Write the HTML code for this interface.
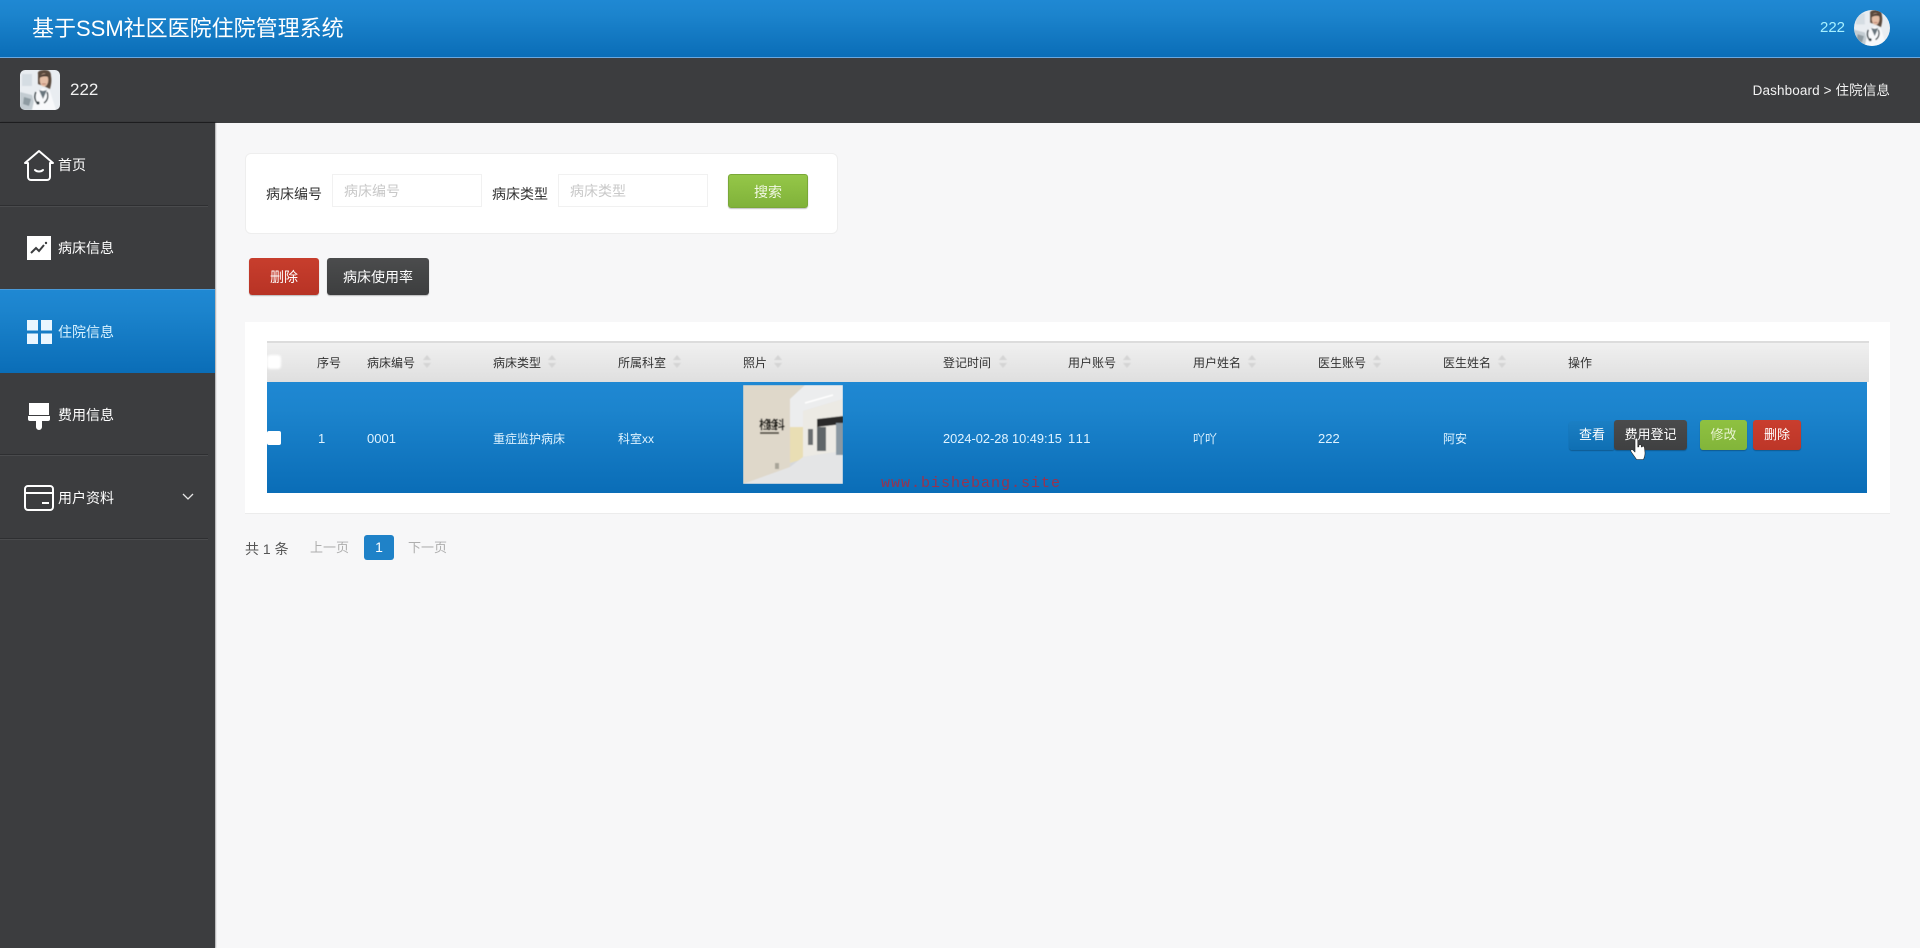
<!DOCTYPE html>
<html lang="zh">
<head>
<meta charset="utf-8">
<title>基于SSM社区医院住院管理系统</title>
<style>
*{box-sizing:border-box;margin:0;padding:0}
html,body{width:1920px;height:948px;overflow:hidden;background:#f7f7f8}
body{font-family:"Liberation Sans","Noto Sans CJK SC",sans-serif;color:#333}
#p{position:absolute;left:0;top:0;width:1920px;height:948px;overflow:hidden;background:#f7f7f8;filter:blur(.35px)}
.a{position:absolute}
.t{position:absolute;line-height:20px;height:20px;white-space:nowrap}
.blue{background:linear-gradient(#1f88d3,#1c84cd 25%,#0a6db7)}
.nav{color:#fff;font-size:14px;left:58px}
.sep{position:absolute;left:0;width:208px;height:1px;background:#2e2f31;box-shadow:0 1px 0 #4a4b4d}
.btn{position:absolute;color:#fff;font-size:13px;text-align:center;border-radius:3px;box-shadow:0 1px 1px rgba(0,0,0,.25)}
.th{font-size:12px;color:#333;top:353px}
.td{font-size:12px;color:#dff3ff;top:429px}
.n{font-size:13px}
.sort{position:absolute;top:355px;width:8px;height:13px;filter:blur(.5px)}
</style>
</head>
<body>
<div id="p">
<svg width="0" height="0" style="position:absolute">
<defs><filter id="av" x="0" y="0" width="100%" height="100%"><feGaussianBlur stdDeviation=".5"/></filter></defs>
<symbol id="doc" viewBox="0 0 40 40">
<rect width="40" height="40" fill="#e9edf1"/>
<g filter="url(#av)">
<rect x="2" y="4" width="10" height="12" fill="#d5dde3"/>
<path d="M0 22l12 3 4 15H0z" fill="#c3ccd2"/>
<path d="M4 27l7 2-2 7-6-2z" fill="#8e9ba2"/>
<path d="M12 40l4-18 7-4 7 3 6 19z" fill="#f8f9fb"/>
<path d="M19 20l4 9 4-9-4 1z" fill="#68757d"/>
<path d="M16 22c-2 5-1 9 2 12M27 22c2 5 0 9-3 11" stroke="#2f3a41" stroke-width="1.400" fill="none"/>
<circle cx="18" cy="33" r="1.600" fill="#2f3a41"/>
<path d="M18 4c-1-3 3-4 7-4 4 0 6 2 6 6 1 5 0 9-1 13l-4-2-8-3z" fill="#5a4a3e"/>
<ellipse cx="24" cy="10" rx="4.300" ry="6.500" fill="#e4bda5"/>
<path d="M19.500 8c1-3 3-4 5-4 2 0 3.500 1 4 3-3-1-6-1-9 1z" fill="#4a3b31"/>
<path d="M22 14h4" stroke="#b06a5c" stroke-width=".8"/>
</g>
</symbol>
</svg>

<!-- top bar -->
<div class="a blue" style="left:0;top:0;width:1920px;height:57px"></div>
<div class="a" style="left:0;top:57px;width:1920px;height:1px;background:#6aa8e0"></div>
<div class="t" style="left:32px;top:15px;height:28px;line-height:28px;font-size:22px;color:#fff">基于SSM社区医院住院管理系统</div>
<div class="t" style="left:1820px;top:18px;font-size:15px;color:#a6f0ff">222</div>
<svg class="a" style="left:1854px;top:10px;border-radius:50%" width="36" height="36"><use href="#doc" width="36" height="36"/></svg>

<!-- sub bar -->
<div class="a" style="left:0;top:58px;width:1920px;height:65px;background:#3c3d3f"></div>
<svg class="a" style="left:20px;top:70px;border-radius:5px" width="40" height="40"><use href="#doc" width="40" height="40"/></svg>
<div class="t" style="left:70px;top:80px;font-size:17px;color:#f2f2f2">222</div>
<div class="t" style="right:30px;top:81px;font-size:13.5px;letter-spacing:.12px;color:#f2f2f2">Dashboard &gt; 住院信息</div>

<!-- sidebar -->
<div class="a" style="left:0;top:122px;width:215px;height:826px;background:#3c3d3f;border-top:1px solid #1d1d1f;box-shadow:1px 0 1px rgba(0,0,0,.3)"></div>
<div class="sep" style="top:205px"></div>
<div class="sep" style="top:454px"></div>
<div class="sep" style="top:538px"></div>
<div class="a blue" style="left:0;top:289px;width:215px;height:84px;border-top:1px solid #4a9ad8"></div>

<svg class="a" style="left:23px;top:149px" width="32" height="33" viewBox="0 0 32 33" fill="none" stroke="#fff" stroke-width="2" stroke-linejoin="round" stroke-linecap="round">
<path d="M2 14L16 2l14 12h-3v14a3 3 0 0 1-3 3H8a3 3 0 0 1-3-3V14z"/>
<path d="M12 21c2 2 6 2 8 0"/>
</svg>
<div class="t nav" style="top:155px">首页</div>

<svg class="a" style="left:27px;top:236px" width="24" height="24" viewBox="0 0 24 24">
<rect width="24" height="24" fill="#fff"/>
<path d="M4 17l5-5 3 3 5-6" fill="none" stroke="#3c3d3f" stroke-width="2"/>
<circle cx="19" cy="7" r="1.200" fill="#3c3d3f"/>
</svg>
<div class="t nav" style="top:238px">病床信息</div>

<svg class="a" style="left:27px;top:320px" width="25" height="24" viewBox="0 0 25 24" fill="#eaf6ff">
<rect width="11" height="10.500"/><rect x="14" width="11" height="10.500"/><rect y="13.500" width="11" height="10.500"/><rect x="14" y="13.500" width="11" height="10.500"/>
</svg>
<div class="t nav" style="top:322px;color:#d8f2ff">住院信息</div>

<svg class="a" style="left:28px;top:403px" width="22" height="27" viewBox="0 0 22 27" fill="#fff">
<path d="M1 0h20v12H1z"/><path d="M0 13h22v3a2 2 0 0 1-2 2h-6v6a3 3 0 0 1-6 0v-6H2a2 2 0 0 1-2-2z"/>
</svg>
<div class="t nav" style="top:405px">费用信息</div>

<svg class="a" style="left:24px;top:485px" width="30" height="26" viewBox="0 0 30 26" fill="none" stroke="#fff" stroke-width="2">
<rect x="1" y="1" width="28" height="24" rx="3"/>
<path d="M1 8h28M18 18h7"/>
</svg>
<div class="t nav" style="top:488px">用户资料</div>
<svg class="a" style="left:182px;top:493px" width="12" height="8" viewBox="0 0 12 8" fill="none" stroke="#e6e6e6" stroke-width="1.300"><path d="M1 1l5 5 5-5"/></svg>

<!-- search panel -->
<div class="a" style="left:245px;top:153px;width:593px;height:81px;background:#fff;border:1px solid #eee;border-radius:6px"></div>
<div class="t" style="left:266px;top:184px;font-size:14px">病床编号</div>
<div class="a" style="left:332px;top:174px;width:150px;height:33px;background:#fff;border:1px solid #f1f1f1"></div>
<div class="t" style="left:344px;top:181px;font-size:14px;color:#c8c8c8">病床编号</div>
<div class="t" style="left:492px;top:184px;font-size:14px">病床类型</div>
<div class="a" style="left:558px;top:174px;width:150px;height:33px;background:#fff;border:1px solid #f1f1f1"></div>
<div class="t" style="left:570px;top:181px;font-size:14px;color:#c8c8c8">病床类型</div>
<div class="btn" style="left:728px;top:174px;width:80px;height:34px;line-height:34px;font-size:14px;background:linear-gradient(#95c748,#80b23a);border:1px solid #7aa838;color:#f2f8e4">搜索</div>

<!-- action buttons -->
<div class="btn" style="left:249px;top:258px;width:70px;height:37px;line-height:38px;font-size:14px;background:linear-gradient(#c73e2d,#b83325)">删除</div>
<div class="btn" style="left:327px;top:258px;width:102px;height:37px;line-height:38px;font-size:14px;background:linear-gradient(#4b4c4d,#3d3e3f)">病床使用率</div>

<!-- table panel -->
<div class="a" style="left:245px;top:322px;width:1645px;height:192px;background:#fff;border-bottom:1px solid #ececec"></div>
<div class="a" style="left:267px;top:341px;width:1602px;height:41px;background:linear-gradient(#f0f0f0,#dfdfdf);border-top:2px solid #dcdcdc"></div>
<div class="a blue" style="left:267px;top:382px;width:1600px;height:111px"></div>

<div class="a" style="left:267px;top:355px;width:14px;height:14px;background:#fff;border-radius:3px;filter:blur(1px)"></div>
<div class="a" style="left:267px;top:431px;width:14px;height:14px;background:#fff;border-radius:2px"></div>

<div class="t th" style="left:317px">序号</div>
<div class="t th" style="left:367px">病床编号</div>
<div class="t th" style="left:493px">病床类型</div>
<div class="t th" style="left:618px">所属科室</div>
<div class="t th" style="left:743px">照片</div>
<div class="t th" style="left:943px">登记时间</div>
<div class="t th" style="left:1068px">用户账号</div>
<div class="t th" style="left:1193px">用户姓名</div>
<div class="t th" style="left:1318px">医生账号</div>
<div class="t th" style="left:1443px">医生姓名</div>
<div class="t th" style="left:1568px">操作</div>

<svg width="0" height="0" style="position:absolute"><symbol id="s" viewBox="0 0 8 13"><path d="M4 0l4 5H0zM4 13L0 8h8z" fill="#d4d4d4"/></symbol></svg>
<svg class="sort" style="left:423px"><use href="#s" width="8" height="13"/></svg>
<svg class="sort" style="left:548px"><use href="#s" width="8" height="13"/></svg>
<svg class="sort" style="left:673px"><use href="#s" width="8" height="13"/></svg>
<svg class="sort" style="left:774px"><use href="#s" width="8" height="13"/></svg>
<svg class="sort" style="left:999px"><use href="#s" width="8" height="13"/></svg>
<svg class="sort" style="left:1123px"><use href="#s" width="8" height="13"/></svg>
<svg class="sort" style="left:1248px"><use href="#s" width="8" height="13"/></svg>
<svg class="sort" style="left:1373px"><use href="#s" width="8" height="13"/></svg>
<svg class="sort" style="left:1498px"><use href="#s" width="8" height="13"/></svg>

<div class="t td n" style="left:318px">1</div>
<div class="t td n" style="left:367px">0001</div>
<div class="t td" style="left:493px">重症监护病床</div>
<div class="t td" style="left:618px">科室xx</div>

<svg class="a" style="left:743px;top:385px" width="100" height="99" viewBox="0 0 100 99">
<defs><filter id="b" x="0" y="0" width="100%" height="100%"><feGaussianBlur stdDeviation=".6"/></filter></defs>
<g filter="url(#b)">
<rect width="100" height="99" fill="#d6d8da"/>
<path d="M0 0h62L47 14V86L0 99z" fill="#dfd8ca"/>
<path d="M47 14L62 0h38v14L60 26V42H47z" fill="#ecedee"/>
<path d="M47 42h13v32l-13 4z" fill="#e9deb4"/>
<path d="M60 26l40-12v52l-40 6z" fill="#eceae4"/>
<path d="M0 99L47 82 60 72 100 66V99z" fill="#e4e5e6"/>
<path d="M74 34l26-3v8l-26 3z" fill="#2c2c2c"/>
<rect x="65" y="44" width="5" height="16" fill="#6a6e70"/>
<rect x="74" y="42" width="9" height="24" fill="#5f6568"/>
<rect x="93" y="38" width="7" height="32" fill="#8a98a2"/>
<path d="M62 18l28-8" stroke="#fff" stroke-width="1.500"/>
<text x="16" y="44" font-size="12" font-weight="bold" fill="#1d1a16" font-family="'Noto Sans CJK SC',sans-serif" textLength="26">检验科</text>
<rect x="17" y="47" width="19" height="2" fill="#56524a"/>
<rect x="32" y="78" width="4" height="6" fill="#a8a498"/>
</g>
</svg>

<div class="t td n" style="left:943px;font-size:12.800px">2024-02-28 10:49:15</div>
<div class="t td n" style="left:1068px;letter-spacing:.4px;font-kerning:none">111</div>
<div class="t td" style="left:1193px">吖吖</div>
<div class="t td n" style="left:1318px">222</div>
<div class="t td" style="left:1443px">阿安</div>

<div class="a" style="left:881px;top:475px;font:15px/18px 'Liberation Mono',monospace;letter-spacing:1px;color:rgba(178,40,60,.85);white-space:nowrap">www.bishebang.site</div>

<div class="btn" style="left:1569px;top:421px;width:46px;height:29px;line-height:28px;background:linear-gradient(#1b7fc4,#0f6fb3)">查看</div>
<div class="btn" style="left:1614px;top:420px;width:73px;height:30px;line-height:29px;background:linear-gradient(#4a4b4c,#3f4041)">费用登记</div>
<div class="btn" style="left:1700px;top:420px;width:47px;height:30px;line-height:29px;background:linear-gradient(#8fc141,#82b53a);color:#e8f3d0">修改</div>
<div class="btn" style="left:1753px;top:420px;width:48px;height:30px;line-height:29px;background:linear-gradient(#c93e2e,#bd3628)">删除</div>

<svg class="a" style="left:1630px;top:438px" width="16" height="23" viewBox="0 0 16 23">
<path d="M5 1.500a1.400 1.400 0 0 1 2.800 0V9l1-.2V7.500a1.300 1.300 0 0 1 2.500 0v1.400l.8 0a1.200 1.200 0 0 1 2.300.3l.6 5c.3 3-.5 5-1.500 7.300H6.500C5 19 2.500 16 1 13.500c-.8-1.500.8-2.700 2-1.500l2 2z" fill="#fff" stroke="#222" stroke-width=".6" stroke-linejoin="round"/>
</svg>

<!-- pagination -->
<div class="t" style="left:245px;top:539px;font-size:14px;color:#555">共 1 条</div>
<div class="t" style="left:310px;top:538px;font-size:13px;color:#aeaeae">上一页</div>
<div class="a" style="left:364px;top:535px;width:30px;height:25px;line-height:24px;background:#1f82c8;color:#fff;text-align:center;font-size:14px;border-radius:3px">1</div>
<div class="t" style="left:408px;top:538px;font-size:13px;color:#aeaeae">下一页</div>
</div>
</body>
</html>
